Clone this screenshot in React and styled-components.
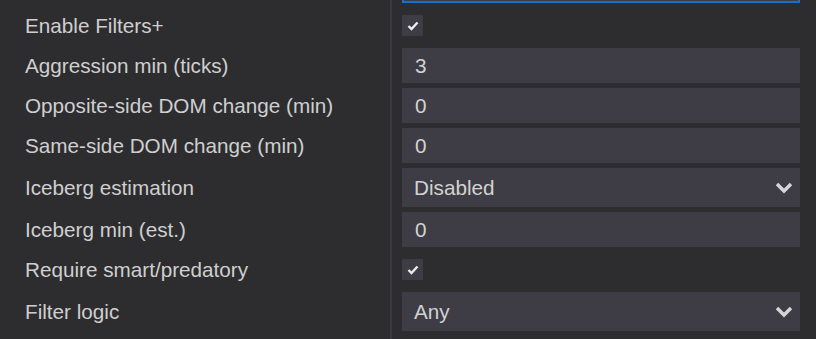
import styled, { createGlobalStyle } from "styled-components"

const GlobalStyle = createGlobalStyle`
  html, body {
    margin: 0;
    padding: 0;
    background: #2d2d30;
    overflow: hidden;
  }
  body {
    font-family: "Liberation Sans", Arial, sans-serif;
  }
`

const rows = [
  { label: "Enable Filters+", type: "check" },
  { label: "Aggression min (ticks)", type: "input", value: "3" },
  { label: "Opposite-side DOM change (min)", type: "input", value: "0" },
  { label: "Same-side DOM change (min)", type: "input", value: "0" },
  { label: "Iceberg estimation", type: "select", value: "Disabled" },
  { label: "Iceberg min (est.)", type: "input", value: "0" },
  { label: "Require smart/predatory", type: "check" },
  { label: "Filter logic", type: "select", value: "Any" },
]

const Chevron = () => (
  <svg width="18" height="13" viewBox="0 0 18 13">
    <path d="M2 3 L9 10 L16 3" fill="none" stroke="#d6d6d8" strokeWidth="3.4" />
  </svg>
)

const CheckMark = () => (
  <svg width="12" height="10" viewBox="0 0 12 10">
    <path d="M1.5 5 L4.5 8 L10.5 1.5" fill="none" stroke="#ececec" strokeWidth="2.4" />
  </svg>
)

const Field = ({ row }) => {
  if (row.type === "check") {
    return <CheckBox><CheckMark /></CheckBox>
  }
  if (row.type === "select") {
    return (
      <Select>
        <span>{row.value}</span>
        <Chevron />
      </Select>
    )
  }
  return <Input>{row.value}</Input>
}

const Row = ({ row }) => {
  const h = row.type === "select" ? 39 : 35
  return (
    <>
      <Label>{row.label}</Label>
      <Cell $h={h}><Field row={row} /></Cell>
    </>
  )
}

const App = () => {
  return (
    <>
      <GlobalStyle />
      <Panel>
        <Label />
        <Cell $h={35}><FocusedInput /></Cell>
        {rows.map((row) => (
          <Row key={row.label} row={row} />
        ))}
      </Panel>
    </>
  )
}

const Panel = styled.div`
  margin-top: -32px;
  display: grid;
  grid-template-columns: 392px 1fr;
  row-gap: 5px;
  padding-bottom: 8px;
  background: linear-gradient(
    to right,
    transparent 390px,
    #3a3a3e 390px,
    #3a3a3e 392px,
    transparent 392px
  );
`

const Label = styled.div`
  display: flex;
  align-items: center;
  padding-left: 25px;
  font-size: 20.7px;
  color: #cfcfcf;
  white-space: nowrap;
`

const Cell = styled.div`
  height: ${(p) => p.$h}px;
  display: flex;
  align-items: center;
  padding: 0 16px 0 10px;
`

const Box = styled.div`
  box-sizing: border-box;
  width: 100%;
  height: 100%;
  background: #3e3d45;
  color: #d2d2d2;
  font-size: 20.7px;
  display: flex;
  align-items: center;
`

const Input = styled(Box)`
  padding-left: 13px;
`

const FocusedInput = styled(Box)`
  border: 2px solid #1b6ec2;
`

const Select = styled(Box)`
  justify-content: space-between;
  padding: 0 7px 0 12px;
`

const CheckBox = styled.div`
  width: 21px;
  height: 21px;
  background: #3e3d45;
  display: flex;
  align-items: center;
  justify-content: center;
`

export default App
